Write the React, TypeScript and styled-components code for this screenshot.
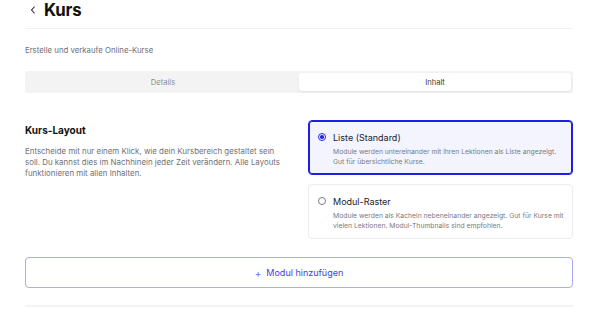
import React, { useState } from 'react';
import styled, { createGlobalStyle } from 'styled-components';

const GlobalStyle = createGlobalStyle`
  * { box-sizing: border-box; }
  body {
    margin: 0;
    background: #ffffff;
    font-family: Inter, "Noto Sans", "Liberation Sans", sans-serif;
    color: #111;
  }
`;

const Page = styled.div`
  padding: 0 27px 0 25px;
`;

const Header = styled.header`
  display: flex;
  align-items: center;
  gap: 6px;
  padding-bottom: 8px;
  border-bottom: 1px solid #f0f0f1;
`;

const BackButton = styled.button`
  display: flex;
  align-items: center;
  justify-content: center;
  width: 10px;
  height: 20px;
  margin-left: 3px;
  padding: 0;
  border: 0;
  background: none;
  color: #222;
  cursor: pointer;
`;

const Title = styled.h1`
  margin: 0;
  font-size: 16.8px;
  line-height: 20px;
  font-weight: 700;
  letter-spacing: -0.2px;
`;

const Subtitle = styled.p`
  margin: 15px 0 0;
  font-size: 7.8px;
  line-height: 12px;
  color: #6f6f73;
`;

const Tabs = styled.div`
  display: grid;
  grid-template-columns: 1fr 1fr;
  margin-top: 15px;
  padding: 2px;
  height: 22px;
  background: #f3f3f4;
  border-radius: 3px;
`;

const Tab = styled.button<{ $active?: boolean }>`
  border: 0;
  border-radius: 3px;
  padding: 0;
  font-family: inherit;
  font-size: 7.6px;
  color: ${p => (p.$active ? '#3a3a3d' : '#8d8d92')};
  background: ${p => (p.$active ? '#ffffff' : 'transparent')};
  box-shadow: ${p => (p.$active ? '0 1px 2px rgba(0,0,0,0.08)' : 'none')};
  cursor: pointer;
`;

const Section = styled.section`
  display: grid;
  grid-template-columns: minmax(0, 1fr) minmax(0, 1fr);
  gap: 18px;
  margin-top: 27px;
`;

const SectionTitle = styled.h2`
  margin: 3px 0 0;
  font-size: 10px;
  line-height: 14px;
  font-weight: 700;
`;

const SectionText = styled.p`
  margin: 8.5px 0 0;
  font-size: 7.9px;
  line-height: 11px;
  color: #707075;
`;

const Options = styled.div`
  display: flex;
  flex-direction: column;
  gap: 9px;
`;

const OptionCard = styled.label<{ $selected?: boolean }>`
  display: block;
  padding: 10px 6px 7px 9px;
  border: 1px solid ${p => (p.$selected ? '#1e1ee6' : '#ececee')};
  box-shadow: ${p => (p.$selected ? 'inset 0 0 0 1px #1e1ee6' : 'none')};
  background: ${p => (p.$selected ? '#f3f4fe' : '#ffffff')};
  border-radius: 4px;
  cursor: pointer;
`;

const OptionHead = styled.div`
  display: flex;
  align-items: center;
  gap: 7px;
  height: 12px;
`;

const Radio = styled.span<{ $checked?: boolean }>`
  display: flex;
  align-items: center;
  justify-content: center;
  width: 8px;
  height: 8px;
  border-radius: 50%;
  border: 1px solid ${p => (p.$checked ? '#2323e6' : '#7d7d82')};
  background: #fff;

  &::after {
    content: '';
    width: 3.6px;
    height: 3.6px;
    border-radius: 50%;
    background: ${p => (p.$checked ? '#2323e6' : 'transparent')};
  }
`;

const OptionTitle = styled.span`
  font-size: 9px;
  color: #1c1c1f;
`;

const OptionText = styled.p`
  margin: 4px 0 0 15px;
  font-size: 6.8px;
  line-height: 10px;
  color: #7a7a80;
`;

const AddButton = styled.button`
  display: flex;
  align-items: center;
  justify-content: center;
  gap: 5px;
  width: 100%;
  height: 31px;
  margin-top: 18px;
  border: 1px solid #ababf9;
  border-radius: 4px;
  background: #fff;
  font-family: inherit;
  font-size: 9px;
  color: #3d3df0;
  cursor: pointer;
`;

const Plus = styled.span`
  font-size: 10px;
  color: #6a6af2;
`;

const Divider = styled.div`
  height: 2px;
  margin-top: 17px;
  background: #f4f4f5;
`;

const layouts = [
  {
    id: 'list',
    title: 'Liste (Standard)',
    text: 'Module werden untereinander mit ihren Lektionen als Liste angezeigt. Gut für übersichtliche Kurse.',
  },
  {
    id: 'grid',
    title: 'Modul-Raster',
    text: 'Module werden als Kacheln nebeneinander angezeigt. Gut für Kurse mit vielen Lektionen. Modul-Thumbnails sind empfohlen.',
  },
];

export default function App() {
  const [tab, setTab] = useState('content');
  const [layout, setLayout] = useState('list');

  return (
    <>
      <GlobalStyle />
      <Page>
        <Header>
          <BackButton aria-label="Zurück">
            <svg width="6" height="8" viewBox="0 0 6 8" fill="none">
              <path d="M4.2 1 L1.5 4 L4.2 7" stroke="currentColor" strokeWidth="1.1" strokeLinecap="round" strokeLinejoin="round" />
            </svg>
          </BackButton>
          <Title>Kurs</Title>
        </Header>

        <Subtitle>Erstelle und verkaufe Online-Kurse</Subtitle>

        <Tabs>
          <Tab $active={tab === 'details'} onClick={() => setTab('details')}>Details</Tab>
          <Tab $active={tab === 'content'} onClick={() => setTab('content')}>Inhalt</Tab>
        </Tabs>

        <Section>
          <div>
            <SectionTitle>Kurs-Layout</SectionTitle>
            <SectionText>
              Entscheide mit nur einem Klick, wie dein Kursbereich gestaltet sein soll. Du kannst dies im
              Nachhinein jeder Zeit verändern. Alle Layouts funktionieren mit allen Inhalten.
            </SectionText>
          </div>
          <Options>
            {layouts.map(l => (
              <OptionCard key={l.id} $selected={layout === l.id} onClick={() => setLayout(l.id)}>
                <OptionHead>
                  <Radio $checked={layout === l.id} />
                  <OptionTitle>{l.title}</OptionTitle>
                </OptionHead>
                <OptionText>{l.text}</OptionText>
              </OptionCard>
            ))}
          </Options>
        </Section>

        <AddButton>
          <Plus>+</Plus>
          Modul hinzufügen
        </AddButton>

        <Divider />
      </Page>
    </>
  );
}
